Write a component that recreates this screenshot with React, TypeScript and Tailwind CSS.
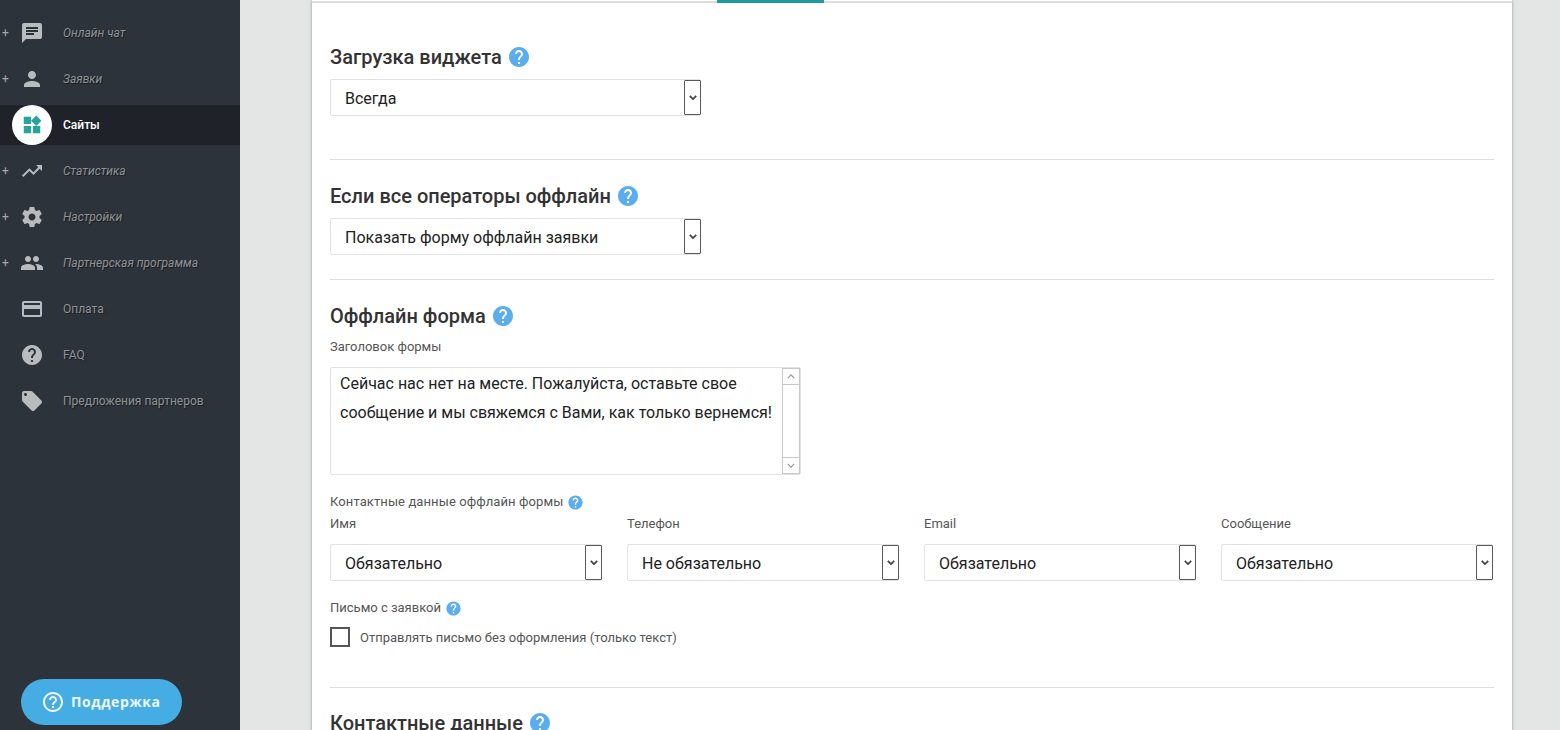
import React from "react";

const ICONS = {
  chat: "M20 2H4c-1.1 0-1.99.9-1.99 2L2 22l4-4h14c1.1 0 2-.9 2-2V4c0-1.1-.9-2-2-2zM6 9h12v2H6V9zm8 5H6v-2h8v2zm4-6H6V6h12v2z",
  person: "M12 12c2.21 0 4-1.79 4-4s-1.79-4-4-4-4 1.79-4 4 1.79 4 4 4zm0 2c-2.67 0-8 1.34-8 4v2h16v-2c0-2.66-5.33-4-8-4z",
  widgets: "M13 13v8h8v-8h-8zM3 21h8v-8H3v8zM3 3v8h8V3H3zm13.66-1.31L11 7.34 16.66 13l5.66-5.66-5.66-5.65z",
  trending: "M16 6l2.29 2.29-4.88 4.88-4-4L2 16.59 3.41 18l6-6 4 4 6.3-6.29L22 12V6z",
  settings: "M19.43 12.98c.04-.32.07-.64.07-.98s-.03-.66-.07-.98l2.11-1.65c.19-.15.24-.42.12-.64l-2-3.46c-.12-.22-.39-.3-.61-.22l-2.49 1c-.52-.4-1.08-.73-1.69-.98l-.38-2.65C14.46 2.18 14.25 2 14 2h-4c-.25 0-.46.18-.49.42l-.38 2.65c-.61.25-1.17.59-1.69.98l-2.49-1c-.23-.09-.49 0-.61.22l-2 3.46c-.13.22-.07.49.12.64l2.11 1.65c-.04.32-.07.65-.07.98s.03.66.07.98l-2.11 1.65c-.19.15-.24.42-.12.64l2 3.46c.12.22.39.3.61.22l2.49-1c.52.4 1.08.73 1.69.98l.38 2.65c.03.24.24.42.49.42h4c.25 0 .46-.18.49-.42l.38-2.65c.61-.25 1.17-.59 1.69-.98l2.49 1c.23.09.49 0 .61-.22l2-3.46c.12-.22.07-.49-.12-.64l-2.11-1.65zM12 15.5c-1.93 0-3.5-1.57-3.5-3.5s1.57-3.5 3.5-3.5 3.5 1.57 3.5 3.5-1.57 3.5-3.5 3.5z",
  people: "M16 11c1.66 0 2.99-1.34 2.99-3S17.66 5 16 5c-1.66 0-3 1.34-3 3s1.34 3 3 3zm-8 0c1.66 0 2.99-1.34 2.99-3S9.66 5 8 5C6.34 5 5 6.34 5 8s1.34 3 3 3zm0 2c-2.33 0-7 1.17-7 3.5V19h14v-2.5c0-2.33-4.67-3.5-7-3.5zm8 0c-.29 0-.62.02-.97.05 1.16.84 1.97 1.97 1.97 3.45V19h6v-2.5c0-2.33-4.67-3.5-7-3.5z",
  card: "M20 4H4c-1.11 0-1.99.89-1.99 2L2 18c0 1.11.89 2 2 2h16c1.11 0 2-.89 2-2V6c0-1.11-.89-2-2-2zm0 14H4v-6h16v6zm0-10H4V6h16v2z",
  help: "M12 2C6.48 2 2 6.48 2 12s4.48 10 10 10 10-4.48 10-10S17.52 2 12 2zm1 17h-2v-2h2v2zm2.07-7.75l-.9.92C13.45 12.9 13 13.5 13 15h-2v-.5c0-1.1.45-2.1 1.17-2.83l1.24-1.26c.37-.36.59-.86.59-1.41 0-1.1-.9-2-2-2s-2 .9-2 2H8c0-2.21 1.79-4 4-4s4 1.79 4 4c0 .88-.36 1.68-.93 2.25z",
  tag: "M21.41 11.58l-9-9C12.05 2.22 11.55 2 11 2H4c-1.1 0-2 .9-2 2v7c0 .55.22 1.05.59 1.42l9 9c.36.36.86.58 1.41.58.55 0 1.05-.22 1.41-.59l7-7c.37-.36.59-.86.59-1.41 0-.55-.23-1.06-.59-1.42zM5.5 7C4.67 7 4 6.33 4 5.5S4.67 4 5.5 4 7 4.67 7 5.5 6.33 7 5.5 7z",
  helpOutline: "M11 18h2v-2h-2v2zm1-16C6.48 2 2 6.48 2 12s4.48 10 10 10 10-4.48 10-10S17.52 2 12 2zm0 18c-4.41 0-8-3.59-8-8s3.59-8 8-8 8 3.59 8 8-3.59 8-8 8zm0-14c-2.21 0-4 1.79-4 4h2c0-1.1.9-2 2-2s2 .9 2 2c0 2-3 1.75-3 5h2c0-2.25 3-2.5 3-5 0-2.21-1.79-4-4-4z",
};

const Icon = ({ d, className }: { d: string; className: string }) => (
  <svg viewBox="0 0 24 24" className={className} fill="currentColor">
    <path d={d} />
  </svg>
);

const NAV = [
  { label: "Онлайн чат", icon: ICONS.chat, sub: true },
  { label: "Заявки", icon: ICONS.person, sub: true },
  { label: "Сайты", icon: ICONS.widgets, active: true },
  { label: "Статистика", icon: ICONS.trending, sub: true },
  { label: "Настройки", icon: ICONS.settings, sub: true },
  { label: "Партнерская программа", icon: ICONS.people, sub: true },
  { label: "Оплата", icon: ICONS.card },
  { label: "FAQ", icon: ICONS.help },
  { label: "Предложения партнеров", icon: ICONS.tag },
];

type NavItem = { label: string; icon: string; sub?: boolean; active?: boolean };

const SideItem = ({ item }: { item: NavItem }) => {
  if (item.active) {
    return (
      <div className="flex h-[46px] items-center">
        <div className="flex h-10 w-full items-center bg-[#1f2329] pl-3">
          <div className="flex h-10 w-10 items-center justify-center rounded-full bg-white">
            <Icon d={item.icon} className="h-[22px] w-[22px] text-[#26a69a]" />
          </div>
          <span className="ml-[11px] text-xs font-medium text-white">{item.label}</span>
        </div>
      </div>
    );
  }
  return (
    <div className="flex h-[46px] items-center">
      <span className="w-5 pl-[2px] text-xs leading-none text-[#a5a8ab]">{item.sub ? "+" : ""}</span>
      <Icon d={item.icon} className="h-6 w-6 text-[#b9bcbf]" />
      <span
        className={`ml-[19px] text-xs text-[#8f9295] [text-shadow:1px_1px_1px_rgba(0,0,0,0.45)] ${item.sub ? "italic" : ""}`}
      >
        {item.label}
      </span>
    </div>
  );
};

const Chevron = ({ up, width = "1.5", className }: { up?: boolean; width?: string; className: string }) => (
  <svg viewBox="0 0 10 6" className={className} fill="none" stroke="currentColor" strokeWidth={width}>
    <path d={up ? "M1 5l4-4 4 4" : "M1 1l4 4 4-4"} />
  </svg>
);

const Select = ({ value, className = "" }: { value: string; className?: string }) => (
  <div className={`flex h-[37px] items-center rounded-[2px] border border-[#e2e2e2] bg-white pl-[14px] ${className}`}>
    <span className="flex-1 pt-[2px] text-base text-[#222]">{value}</span>
    <div className="-mr-px flex h-[35px] w-[17px] items-center justify-center rounded-[1px] border border-[#5a5a5a] bg-white text-[#444]">
      <Chevron width="2.2" className="h-[5px] w-2" />
    </div>
  </div>
);

const Heading = ({ children }: { children: React.ReactNode }) => (
  <div className="flex h-7 items-center gap-[5px]">
    <h2 className="text-xl font-medium text-[#333]">{children}</h2>
    <Icon d={ICONS.help} className="h-6 w-6 text-[#5aaeef]" />
  </div>
);

const Small = ({ children, className = "" }: { children: React.ReactNode; className?: string }) => (
  <div className={`h-4 text-[13px] leading-[18px] text-[#555] ${className}`}>{children}</div>
);

const FIELDS = [
  { label: "Имя", value: "Обязательно" },
  { label: "Телефон", value: "Не обязательно" },
  { label: "Email", value: "Обязательно" },
  { label: "Сообщение", value: "Обязательно" },
];

export default function App() {
  return (
    <div className="flex h-[730px] overflow-hidden bg-[#e4e6e5] font-['Roboto',sans-serif]">
      {/* Sidebar */}
      <aside className="flex w-[240px] shrink-0 flex-col bg-[#2d333b] pt-[10px]">
        {NAV.map((item) => (
          <SideItem key={item.label} item={item} />
        ))}
        <button className="mb-[5px] ml-[21px] mt-auto flex h-[46px] w-[161px] items-center rounded-full bg-[#45ade3] pl-[20px] font-['Open_Sans',sans-serif] text-sm font-bold tracking-[0.6px] text-[#eef8fd]">
          <Icon d={ICONS.helpOutline} className="h-6 w-6" />
          <span className="ml-[6px]">Поддержка</span>
        </button>
      </aside>

      {/* Settings card */}
      <main className="flex-1 pl-[72px]">
        <div className="w-[1200px] bg-white shadow-[0_0_3px_rgba(0,0,0,0.35)]">
          <div className="h-[3px] border-b-2 border-[#dcdcdc] pl-[405px]">
            <div className="h-[3px] w-[107px] bg-[#1f9aa3]" />
          </div>

          <div className="px-[18px] pt-10">
            <Heading>Загрузка виджета</Heading>
            <Select value="Всегда" className="mt-2 w-[371px]" />
            <hr className="mt-[43px] border-[#dedede]" />

            <div className="mt-[22px]">
              <Heading>Если все операторы оффлайн</Heading>
            </div>
            <Select value="Показать форму оффлайн заявки" className="mt-2 w-[371px]" />
            <hr className="mt-6 border-[#dedede]" />

            <div className="mt-[22px]">
              <Heading>Оффлайн форма</Heading>
            </div>
            <Small className="mt-2">Заголовок формы</Small>
            <div className="mt-[13px] flex h-[108px] w-[471px] rounded-[2px] border border-[#e2e2e2] bg-white">
              <textarea
                readOnly
                className="flex-1 resize-none overflow-hidden py-[1px] pl-[9px] text-base leading-[29px] text-[#222] outline-none"
                value="Сейчас нас нет на месте. Пожалуйста, оставьте свое сообщение и мы свяжемся с Вами, как только вернемся!"
              />
              <div className="flex w-[18px] flex-col justify-between border border-[#c8c8c8] text-[#9a9a9a]">
                <div className="flex h-4 items-center justify-center border-b border-[#c8c8c8]">
                  <Chevron up className="h-[5px] w-2" />
                </div>
                <div className="flex h-4 items-center justify-center border-t border-[#c8c8c8]">
                  <Chevron className="h-[5px] w-2" />
                </div>
              </div>
            </div>

            <Small className="mt-[19px] flex items-center gap-[4px] tracking-[0.1px]">
              Контактные данные оффлайн формы
              <Icon d={ICONS.help} className="h-[17px] w-[17px] text-[#5aaeef]" />
            </Small>
            <div className="mt-[5px] grid grid-cols-[repeat(4,272px)] gap-x-[25px]">
              {FIELDS.map((f) => (
                <div key={f.label}>
                  <Small>{f.label}</Small>
                  <Select value={f.value} className="mt-[13px]" />
                </div>
              ))}
            </div>

            <Small className="mt-[19px] flex items-center gap-[4px]">
              Письмо с заявкой
              <Icon d={ICONS.help} className="h-[17px] w-[17px] text-[#5aaeef]" />
            </Small>
            <label className="mt-[11px] flex h-5 items-center gap-[10px]">
              <span className="h-5 w-5 border-2 border-[#555] bg-white" />
              <span className="pt-px text-[13px] leading-[19px] text-[#555]">Отправлять письмо без оформления (только текст)</span>
            </label>
            <hr className="mt-10 border-[#dedede]" />

            <div className="mt-[21px]">
              <Heading>Контактные данные</Heading>
            </div>
          </div>
        </div>
      </main>
    </div>
  );
}
